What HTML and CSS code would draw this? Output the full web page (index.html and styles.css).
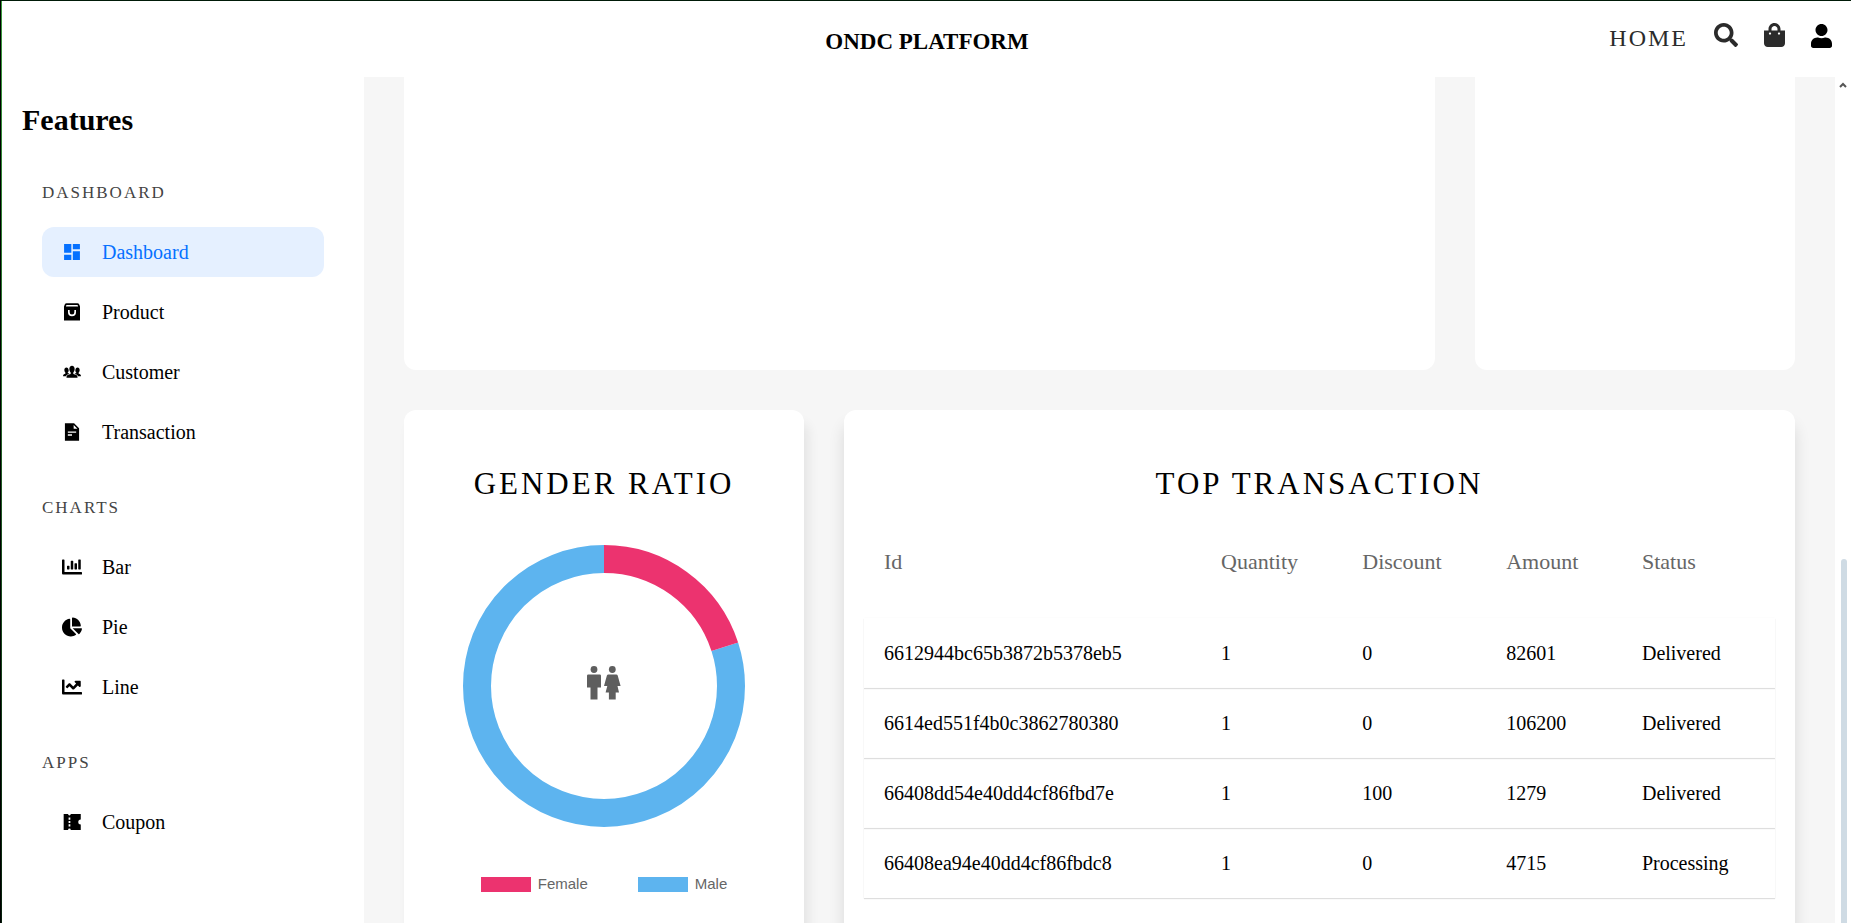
FILE: index.html
```html
<!DOCTYPE html>
<html lang="en">
<head>
<meta charset="utf-8">
<title>ONDC Platform</title>
<link rel="stylesheet" href="styles.css">
</head>
<body>
<header class="topbar">
  <h3 class="brand">ONDC PLATFORM</h3>
  <nav class="topnav">
    <a class="home" href="#">HOME</a>
    <a class="top-icon" href="#" aria-label="Search"><svg viewBox="0 0 512 512"><path d="M505 442.7L405.300 343c-4.500-4.500-10.600-7-17-7H372c27.600-35.300 44-79.700 44-128C416 93.100 322.900 0 208 0S0 93.100 0 208s93.100 208 208 208c48.300 0 92.700-16.400 128-44v16.300c0 6.400 2.500 12.500 7 17l99.700 99.700c9.400 9.400 24.600 9.400 33.900 0l28.300-28.300c9.400-9.400 9.400-24.600.1-34zM208 336c-70.700 0-128-57.200-128-128 0-70.700 57.200-128 128-128 70.700 0 128 57.200 128 128 0 70.700-57.200 128-128 128z"/></svg></a>
    <a class="top-icon" href="#" aria-label="Bag"><svg viewBox="0 0 448 512"><path d="M352 160v-32C352 57.420 294.579 0 224 0 153.420 0 96 57.420 96 128v32H0v272c0 44.183 35.817 80 80 80h288c44.183 0 80-35.817 80-80V160h-96zm-192-32c0-35.290 28.710-64 64-64s64 28.710 64 64v32H160v-32zm160 120c-13.255 0-24-10.745-24-24s10.745-24 24-24 24 10.745 24 24-10.745 24-24 24zm-192 0c-13.255 0-24-10.745-24-24s10.745-24 24-24 24 10.745 24 24-10.745 24-24 24z"/></svg></a>
    <button class="top-icon account" type="button" aria-label="Account"><svg viewBox="0 0 448 512"><path d="M224 256c70.700 0 128-57.300 128-128S294.700 0 224 0 96 57.300 96 128s57.300 128 128 128zm89.600 32h-16.700c-22.200 10.200-46.900 16-72.900 16s-50.600-5.800-72.900-16h-16.700C60.200 288 0 348.200 0 422.400V464c0 26.500 21.500 48 48 48h352c26.500 0 48-21.500 48-48v-41.600c0-74.200-60.200-134.400-134.400-134.400z"/></svg></button>
  </nav>
</header>
<div class="layout">
  <aside class="sidebar">
    <h2 class="sidebar-title">Features</h2>
    <section class="group">
      <h5 class="group-title">DASHBOARD</h5>
      <ul class="menu">
        <li><a class="item active" href="#"><svg viewBox="0 0 24 24"><path d="M2.500 13h8.700V2.500H2.500V13zm0 8.500h8.700v-6.300H2.500v6.300zm10.500 0h8.500V11H13v10.500zm0-19v6.300h8.500V2.500H13z"/></svg>Dashboard</a></li>
        <li><a class="item" href="#"><svg viewBox="0 0 24 24"><path fill-rule="evenodd" d="M5.500 1.500H18.500Q20 1.500 20.700 3L21.600 5.500V22.300H2.400V5.500L3.300 3Q4 1.500 5.500 1.500zM5.300 3.600L4.700 5.300H19.300L18.700 3.600zM7.200 9.500V12.200A4.800 4.800 0 0 0 16.800 12.200V9.500H14.800V12.200A2.800 2.800 0 0 1 9.200 12.200V9.500z"/></svg>Product</a></li>
        <li><a class="item" href="#"><svg viewBox="0 0 24 24"><path d="M12 4.500c-2 0-3.200 1.500-3.200 3.900 0 1.700.7 3.400 1.600 4.200v1.900c-2.900.7-5 1.400-5 3.200V19h13.200v-1.300c0-1.800-2.100-2.500-5-3.200v-1.900c.9-.8 1.600-2.500 1.600-4.200C15.200 6 14 4.500 12 4.500zM5.300 6.500c-1.600 0-2.500 1.200-2.500 3.100 0 1.300.5 2.400 1.200 3.100v1.500c-1.700.5-2.700.9-2.700 2.200v.7h3.300c.6-1.500 2.200-2.500 4.300-3.100-.6-.3-1.600-.3-2-.4v-.9c.6-.5 1.100-1.500 1.100-2.800-.1-2.100-1.100-3.400-2.700-3.400zM18.700 6.500c1.600 0 2.500 1.200 2.500 3.100 0 1.300-.5 2.400-1.200 3.100v1.500c1.700.5 2.700.9 2.700 2.200v.7h-3.300c-.6-1.500-2.200-2.500-4.300-3.100.6-.3 1.600-.3 2-.4v-.9c-.6-.5-1.100-1.500-1.100-2.800.1-2.100 1.100-3.400 2.700-3.400z"/></svg>Customer</a></li>
        <li><a class="item" href="#"><svg viewBox="0 0 24 24"><path fill-rule="evenodd" d="M3.500 1.500H14.500L20.500 7.500V22.500H3.500zM14 3.500V8H18.500zM7 11.300V13H17V11.300zM7 14.800V16.500H12V14.800z"/></svg>Transaction</a></li>
      </ul>
    </section>
    <section class="group">
      <h5 class="group-title">CHARTS</h5>
      <ul class="menu">
        <li><a class="item" href="#"><svg viewBox="0 0 512 512"><path d="M332.800 320h38.400c6.400 0 12.800-6.400 12.800-12.800V172.800c0-6.400-6.400-12.800-12.800-12.800h-38.400c-6.400 0-12.800 6.400-12.800 12.800v134.400c0 6.400 6.400 12.800 12.800 12.800zm96 0h38.400c6.400 0 12.800-6.400 12.800-12.800V76.800c0-6.400-6.400-12.800-12.800-12.800h-38.400c-6.400 0-12.800 6.400-12.800 12.800v230.400c0 6.400 6.400 12.800 12.800 12.800zm-288 0h38.400c6.400 0 12.800-6.400 12.800-12.800v-70.400c0-6.400-6.400-12.800-12.800-12.800h-38.400c-6.400 0-12.800 6.400-12.800 12.800v70.400c0 6.400 6.400 12.800 12.800 12.800zm96 0h38.400c6.400 0 12.800-6.400 12.800-12.800V108.800c0-6.400-6.400-12.800-12.800-12.800h-38.400c-6.400 0-12.800 6.400-12.800 12.800v198.400c0 6.400 6.400 12.800 12.800 12.800zM496 384H64V80c0-8.840-7.160-16-16-16H16C7.160 64 0 71.160 0 80v336c0 17.670 14.330 32 32 32h464c8.840 0 16-7.160 16-16v-32c0-8.840-7.160-16-16-16z"/></svg>Bar</a></li>
        <li><a class="item" href="#"><svg viewBox="0 0 544 512"><path d="M527.790 288H290.500l158.030 158.030c6.040 6.040 15.980 6.530 22.190.68 38.700-36.460 65.320-85.610 73.130-140.860 1.340-9.460-6.510-17.850-16.060-17.850zm-15.830-64.800C503.720 103.740 408.260 8.280 288.800.04 279.680-.59 272 7.100 272 16.240V240h223.770c9.140 0 16.820-7.680 16.190-16.800zM224 288V50.710c0-9.550-8.390-17.400-17.840-16.060C86.990 51.490-4.100 155.600.140 280.370 4.500 408.510 114.830 513.590 243.030 511.980c50.400-.63 96.970-16.870 135.260-44.030 7.900-5.600 8.420-17.230 1.570-24.080L224 288z"/></svg>Pie</a></li>
        <li><a class="item" href="#"><svg viewBox="0 0 512 512"><path d="M496 384H64V80c0-8.840-7.160-16-16-16H16C7.160 64 0 71.160 0 80v336c0 17.670 14.330 32 32 32h464c8.840 0 16-7.160 16-16v-32c0-8.840-7.160-16-16-16zM464 96H345.940c-21.380 0-32.090 25.850-16.970 40.970l32.400 32.400L288 242.750l-73.370-73.370c-12.500-12.500-32.760-12.500-45.250 0l-68.690 68.690c-6.250 6.250-6.250 16.380 0 22.630l22.620 22.620c6.250 6.250 16.380 6.250 22.630 0L192 237.250l73.370 73.370c12.500 12.500 32.760 12.500 45.250 0l96-96 32.400 32.400c15.120 15.120 40.970 4.410 40.970-16.970V112c.01-8.840-7.150-16-15.990-16z"/></svg>Line</a></li>
      </ul>
    </section>
    <section class="group">
      <h5 class="group-title">APPS</h5>
      <ul class="menu">
        <li><a class="item" href="#"><svg viewBox="0 0 24 24"><path fill-rule="evenodd" d="M2 2.500H7.300a1.600 1.600 0 0 0 3.200 0H22.500V9a3 3 0 0 0 0 6V21.500H10.500A1.600 1.600 0 0 0 7.300 21.500H2zM7.900 6.500V9.200H10V6.500zM7.900 10.700V13.300H10V10.700zM7.900 14.800V17.500H10V14.800z"/></svg>Coupon</a></li>
      </ul>
    </section>
  </aside>
  <main class="content">
    <section class="row charts-row">
      <div class="card chart-wide"></div>
      <div class="card chart-narrow"></div>
    </section>
    <section class="row data-row">
      <article class="card gender">
        <h2 class="card-title">GENDER RATIO</h2>
        <div class="donut-box">
          <svg class="donut" viewBox="-141 -141 282 282" role="img" aria-label="Gender ratio: female 20%, male 80%">
            <circle class="male" r="127" pathLength="100" stroke-dasharray="80 20" stroke-dashoffset="-20" transform="rotate(-90)"/>
            <circle class="female" r="127" pathLength="100" stroke-dasharray="20 80" transform="rotate(-90)"/>
          </svg>
          <svg class="people" viewBox="0 0 34 34"><circle cx="7" cy="3.500" r="3.400"/><path d="M1.200 8.500H12.800Q14 8.500 14 9.700V21.500H10.500V33.500H3.500V21.500H0V9.700Q0 8.500 1.200 8.500z"/><circle cx="25.300" cy="3.500" r="3.400"/><path d="M21.300 8.500H29.300Q30.300 8.500 30.700 9.500L33.600 20H30.500L32 26.500H28.700V33.500H21.900V26.500H18.600L20.300 20H17L19.900 9.500Q20.300 8.500 21.300 8.500z"/></svg>
        </div>
        <ul class="legend">
          <li><span class="swatch swatch-female"></span>Female</li>
          <li><span class="swatch swatch-male"></span>Male</li>
        </ul>
      </article>
      <article class="card transactions">
        <h2 class="card-title">TOP TRANSACTION</h2>
        <table class="table">
          <thead>
            <tr><th class="col-id">Id</th><th class="col-qty">Quantity</th><th class="col-disc">Discount</th><th class="col-amt">Amount</th><th>Status</th></tr>
          </thead>
          <tbody>
            <tr><td>6612944bc65b3872b5378eb5</td><td>1</td><td>0</td><td>82601</td><td>Delivered</td></tr>
            <tr><td>6614ed551f4b0c3862780380</td><td>1</td><td>0</td><td>106200</td><td>Delivered</td></tr>
            <tr><td>66408dd54e40dd4cf86fbd7e</td><td>1</td><td>100</td><td>1279</td><td>Delivered</td></tr>
            <tr><td>66408ea94e40dd4cf86fbdc8</td><td>1</td><td>0</td><td>4715</td><td>Processing</td></tr>
          </tbody>
        </table>
      </article>
    </section>
  </main>
  <div class="scrollbar" aria-hidden="true">
    <svg class="scroll-up" viewBox="0 0 8 6"><path d="M1 5L4 2L7 5"/></svg>
    <div class="scroll-thumb"></div>
  </div>
</div>
</body>
</html>
```
FILE: styles.css
```css
* {
  box-sizing: border-box;
  margin: 0;
  padding: 0;
}

body {
  display: flex;
  flex-direction: column;
  height: 100vh;
  overflow: hidden;
  padding-left: 1px;
  border-top: 1px solid #001a08;
  border-left: 1px solid #000;
  background: linear-gradient(#3a9a3e, #06200c) 1px 0 / 1px 100% no-repeat #fff;
  color: #000;
  font-family: "Liberation Serif", "Times New Roman", serif;
  font-size: 20px;
}

ul {
  list-style: none;
}

a {
  color: inherit;
  text-decoration: none;
}

svg {
  display: block;
  fill: currentColor;
}

.topbar {
  display: grid;
  grid-template-columns: 1fr auto 1fr;
  flex: none;
  height: 76px;
  padding-right: 19px;
}

.brand {
  grid-column: 2;
  padding-top: 28px;
  font-size: 23px;
  line-height: 26px;
  margin-left: 20px;
}

.topnav {
  display: flex;
  justify-content: flex-end;
  align-items: flex-start;
  gap: 26px;
  padding-top: 22px;
  color: #2b2b2b;
}

.home {
  padding-top: 1px;
  font-size: 24px;
  line-height: 28px;
  letter-spacing: 2px;
}

.top-icon {
  border: 0;
  background: none;
  color: inherit;
}

.top-icon svg {
  height: 24px;
}

.account {
  padding-top: 1px;
  color: #000;
}

.layout {
  display: flex;
  flex: 1;
  min-height: 0;
}

.sidebar {
  flex: none;
  width: 362px;
  padding: 26px 40px 0;
}

.sidebar-title {
  margin: 0 -20px 45px;
  font-size: 30px;
  line-height: 34px;
}

.group {
  margin-bottom: 40px;
}

.group-title {
  padding-bottom: 23px;
  color: #444;
  font-size: 17px;
  font-weight: 400;
  line-height: 22px;
  letter-spacing: 2px;
}

.menu {
  display: flex;
  flex-direction: column;
  gap: 10px;
}

.item {
  display: flex;
  align-items: center;
  gap: 20px;
  height: 50px;
  padding: 0 20px;
  border-radius: 12px;
}

.item svg {
  width: 20px;
  height: 20px;
}

.active {
  background: #e5f0ff;
  color: #0671ff;
}

.content {
  flex: 1;
  min-width: 0;
  overflow: hidden;
  padding: 0 40px;
  background: #f6f6f6;
}

.row {
  display: flex;
  gap: 40px;
}

.card {
  border-radius: 12px;
  background: #fff;
}

.charts-row {
  height: 293px;
  margin-bottom: 40px;
}

.charts-row .card {
  border-radius: 0 0 12px 12px;
}

.chart-wide {
  flex: 1;
}

.chart-narrow {
  width: 320px;
}

.data-row .card {
  padding: 0 20px 40px;
}

.gender {
  flex: none;
  width: 400px;
  box-shadow: 5px 12px 12px rgba(0, 0, 0, 0.07);
}

.transactions {
  flex: 1;
  min-width: 0;
  box-shadow: 0 14px 16px rgba(0, 0, 0, 0.12);
}

.card-title {
  padding: 56px 0 43px;
  font-size: 31px;
  font-weight: 400;
  line-height: 36px;
  letter-spacing: 3px;
  text-align: center;
}

.donut-box {
  display: grid;
  justify-content: center;
  align-items: center;
}

.donut,
.people {
  grid-area: 1 / 1;
}

.donut {
  width: 282px;
  fill: none;
}

.donut circle {
  fill: none;
  stroke-width: 28px;
}

.male {
  stroke: #5db4ef;
}

.female {
  stroke: #ec336f;
}

.people {
  justify-self: center;
  width: 34px;
  margin-bottom: 6px;
  color: #5e5e5e;
}

.legend {
  display: flex;
  justify-content: center;
  gap: 50px;
  padding-top: 48px;
  color: #666;
  font-family: "Liberation Sans", Arial, sans-serif;
  font-size: 15px;
  line-height: 18px;
}

.legend li {
  display: flex;
  align-items: center;
  gap: 7px;
}

.swatch {
  width: 50px;
  height: 15px;
}

.swatch-female {
  background: #ec336f;
}

.swatch-male {
  background: #5db4ef;
}

.table {
  width: 100%;
  table-layout: fixed;
  border-collapse: collapse;
  text-align: left;
}

.table th {
  height: 73px;
  padding: 0 20px 40px;
  color: #666;
  font-size: 22px;
  font-weight: 400;
}

.table td {
  height: 70px;
  padding: 0 20px;
}

.table tbody tr {
  box-shadow: 0 1px 1px rgba(0, 0, 0, 0.12), 0 0 2px rgba(0, 0, 0, 0.03);
}

.col-id {
  width: 37%;
}

.col-qty {
  width: 15.5%;
}

.col-disc {
  width: 15.8%;
}

.col-amt {
  width: 14.9%;
}

.scrollbar {
  display: flex;
  flex-direction: column;
  flex: none;
  width: 16px;
}

.scroll-up {
  width: 8px;
  height: 6px;
  margin: 5px 0 0 4px;
  fill: none;
  stroke: #555;
  stroke-width: 2px;
}

.scroll-thumb {
  flex: 1;
  width: 6px;
  margin: 471px 0 0 6px;
  border-radius: 3px 3px 0 0;
  background: #cfdbe4;
}
```
